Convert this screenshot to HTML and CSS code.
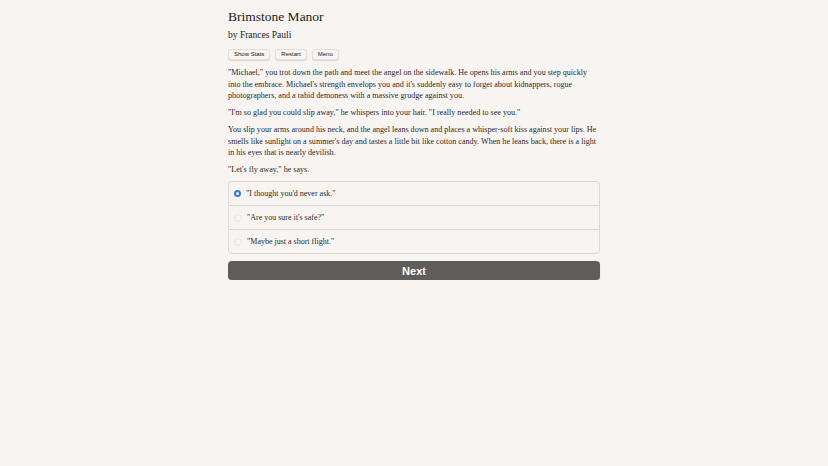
FILE: index.html
```html
<!DOCTYPE html>
<html>
<head>
<meta charset="utf-8">
<link rel="stylesheet" href="styles.css">
</head>
<body>
<div class="container">
  <h1 class="title">Brimstone Manor</h1>
  <h2 class="author">by Frances Pauli</h2>
  <div class="buttons">
    <button class="small">Show Stats</button>
    <button class="small">Restart</button>
    <button class="small">Menu</button>
  </div>
  <div class="text">
    <p>"Michael," you trot down the path and meet the angel on the sidewalk. He opens his arms and you step quickly into the embrace. Michael's strength envelops you and it's suddenly easy to forget about kidnappers, rogue photographers, and a rabid demoness with a massive grudge against you.</p>
    <p>"I'm so glad you could slip away," he whispers into your hair. "I really needed to see you."</p>
    <p>You slip your arms around his neck, and the angel leans down and places a whisper-soft kiss against your lips. He smells like sunlight on a summer's day and tastes a little bit like cotton candy. When he leans back, there is a light in his eyes that is nearly devilish.</p>
    <p>"Let's fly away," he says.</p>
  </div>
  <div class="choices">
    <label class="choice"><span class="radio checked"></span>"I thought you'd never ask."</label>
    <label class="choice"><span class="radio"></span>"Are you sure it's safe?"</label>
    <label class="choice"><span class="radio"></span>"Maybe just a short flight."</label>
  </div>
  <button class="next">Next</button>
</div>
</body>
</html>
```

FILE: styles.css
```css
html, body {
  margin: 0;
  padding: 0;
  background: #f7f4f1;
}
body {
  font-family: "Liberation Serif", "Times New Roman", serif;
  color: #2b2b2b;
}
.container {
  width: 372px;
  margin: 0 auto;
  padding-top: 9px;
}
.title {
  font-size: 13.5px;
  font-weight: normal;
  margin: 0;
  line-height: 16px;
  color: #222;
}
.author {
  font-size: 9.5px;
  font-weight: normal;
  margin: 0;
  padding-top: 4px;
  line-height: 12px;
  color: #222;
}
.buttons {
  display: flex;
  gap: 5px;
  margin-top: 8px;
}
.small {
  font-family: "Liberation Sans", Arial, sans-serif;
  font-size: 6px;
  line-height: 7px;
  padding: 1px 5px;
  background: #f7f4f1;
  border: 1px solid #e2dfdb;
  border-radius: 3px;
  box-shadow: 0 1px 1px rgba(0,0,0,0.12);
  color: #222;
}
.text {
  margin-top: 7px;
  font-size: 8.1px;
  line-height: 11.5px;
  color: #2b2b2b;
}
.text p {
  margin: 0 0 5.5px 0;
}
.choices {
  margin-top: 4px;
  border: 1px solid #dcd9d5;
  border-radius: 4px;
}
.choice {
  display: flex;
  align-items: center;
  height: 23px;
  padding-left: 5px;
  font-size: 8px;
  color: #2b2b2b;
  border-top: 1px solid #d9d6d2;
}
.choice:first-child {
  border-top: none;
}
.radio {
  width: 6px;
  height: 6px;
  border-radius: 50%;
  border: 1px solid #e4e1de;
  background: #f9f7f5;
  margin-right: 5px;
  box-sizing: content-box;
}
.radio.checked {
  border: 2px solid #2f7ed8;
  width: 3px;
  height: 3px;
  background: #fff;
}
.next {
  display: block;
  width: 100%;
  margin-top: 7px;
  height: 19px;
  border: none;
  border-radius: 4px;
  background: #5f5d5a;
  color: #fff;
  font-family: "Liberation Sans", Arial, sans-serif;
  font-weight: bold;
  font-size: 11px;
  box-shadow: 0 1px 1px rgba(0,0,0,0.2);
}
```
